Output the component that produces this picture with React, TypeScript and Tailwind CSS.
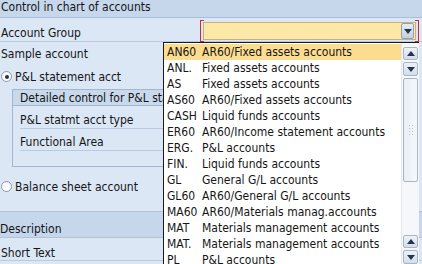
const items: [string, string][] = [
  ['AN60', 'AR60/Fixed assets accounts'],
  ['ANL.', 'Fixed assets accounts'],
  ['AS', 'Fixed assets accounts'],
  ['AS60', 'AR60/Fixed assets accounts'],
  ['CASH', 'Liquid funds accounts'],
  ['ER60', 'AR60/Income statement accounts'],
  ['ERG.', 'P&L accounts'],
  ['FIN.', 'Liquid funds accounts'],
  ['GL', 'General G/L accounts'],
  ['GL60', 'AR60/General G/L accounts'],
  ['MA60', 'AR60/Materials manag.accounts'],
  ['MAT', 'Materials management accounts'],
  ['MAT.', 'Materials management accounts'],
  ['PL', 'P&L accounts'],
];

const Triangle = ({ up = false }: { up?: boolean }) => (
  <svg width="8" height="5" viewBox="0 0 8 5">
    <path d={up ? 'M0 5 L4 0 L8 5 Z' : 'M0 0 L8 0 L4 5 Z'} fill="#23344f" />
  </svg>
);

const ScrollButton = ({ up = false, tall = false }: { up?: boolean; tall?: boolean }) => (
  <div
    className={`flex w-[15px] items-center justify-center rounded-[2px] border border-[#a7b5c8] bg-gradient-to-b from-[#eef2f7] to-[#d3dce8] ${tall ? 'h-[14px]' : 'h-[13px]'}`}
  >
    <Triangle up={up} />
  </div>
);

const Radio = ({ checked = false }: { checked?: boolean }) => (
  <div className="flex h-[11px] w-[11px] items-center justify-center rounded-full border border-[#8d9aab] bg-gradient-to-b from-[#f4f6f9] to-[#ffffff]">
    {checked && <div className="h-[4px] w-[4px] rounded-full bg-[#2a2f38]" />}
  </div>
);

export default function App() {
  return (
    <div className="relative h-[264px] w-[422px] overflow-hidden bg-[#dbe7f5] font-['DejaVu_Sans_Condensed','DejaVu_Sans',sans-serif] text-[12px] leading-[14px] text-[#151515]">
      <div className="h-[18px] border-b border-[#a9bdd8] bg-[#c6d7ec] pl-[1px]">Control in chart of accounts</div>

      <div className="flex h-[24px] items-start border-b border-[#b9cbe2]">
        <div className="w-[200px] pl-[1px] pt-[8px]">Account Group</div>
        <div className="relative mt-[2px] h-[22px] w-[219px] px-[3px] pt-[2px]">
          <div className="absolute left-0 top-0 h-[22px] w-[4px] border-y border-l border-[#cc2b35]" />
          <div className="absolute right-0 top-0 h-[22px] w-[4px] border-y border-r border-[#cc2b35]" />
          <div className="flex h-[18px] items-center justify-end border border-[#c7b07c] bg-[#fde8a8] pr-[1px]">
            <div className="flex h-[16px] w-[13px] items-center justify-center rounded-[2px] border border-[#8fa0b8] bg-gradient-to-b from-[#e7edf5] to-[#c4d0e0]">
              <Triangle />
            </div>
          </div>
        </div>
      </div>

      <div className="h-[22px] pl-[1px] pt-[5px]">Sample account</div>

      <div className="flex h-[25px] items-start gap-[3px] pl-[1px] pt-[6px]">
        <div className="mt-[1px]">
          <Radio checked />
        </div>
        <span>P&amp;L statement acct</span>
      </div>

      <div className="ml-[12px] mr-[4px] h-[78px] border border-[#a4b6cf]">
        <div className="h-[16px] border-b border-[#a4b6cf] bg-[#c9d9ec] pl-[7px] pt-[1px]">
          <div className="w-[143px] overflow-hidden whitespace-nowrap">Detailed control for P&amp;L statement accounts</div>
        </div>
        <div className="ml-[7px] h-[23px] border-b border-[#b9cbe2] pt-[7px]">P&amp;L statmt acct type</div>
        <div className="ml-[7px] h-[22px] border-b border-[#b9cbe2] pt-[6px]">Functional Area</div>
      </div>

      <div className="flex h-[45px] items-start gap-[3px] border-b border-[#b1c3db] pl-[1px] pt-[13px]">
        <div className="mt-[1px]">
          <Radio />
        </div>
        <span>Balance sheet account</span>
      </div>

      <div className="h-[26px] border-b border-[#b1c3db] bg-[#c6d7ec] pt-[10px]">Description</div>
      <div className="h-[23px] border-b border-[#b9cbe2] pl-[1px] pt-[8px]">Short Text</div>

      <div className="absolute left-[163px] top-[42px] flex h-[224px] w-[256px] border-l border-t border-[#1a1a1a] bg-white">
        <div className="w-[237px] pt-px">
          {items.map(([code, text], i) => (
            <div
              key={code}
              className={`flex h-[16px] items-center pl-[3px] leading-[16px] ${i === 0 ? 'bg-[#fcdd90]' : ''}`}
            >
              <span className="w-[35px] shrink-0">{code}</span>
              <span className="whitespace-nowrap">{text}</span>
            </div>
          ))}
        </div>
        <div className="flex w-[18px] flex-col items-center border-l border-[#e3e8ef] bg-[#f5f7fa] pt-[4px]">
          <ScrollButton up />
          <div className="mt-[2px]">
            <ScrollButton tall />
          </div>
          <div className="mt-[2px] flex h-[104px] w-[15px] flex-col items-center justify-center gap-[2px] rounded-[2px] border border-[#a7b5c8] bg-gradient-to-r from-[#e9eef5] to-[#f6f8fb]">
            {[0, 1, 2, 3].map((k) => (
              <div key={k} className="flex gap-[2px]">
                <div className="h-px w-px bg-[#b3bfcf]" />
                <div className="h-px w-px bg-[#b3bfcf]" />
              </div>
            ))}
          </div>
          <div className="flex-1" />
          <ScrollButton up />
          <div className="mb-[2px] mt-[2px]">
            <ScrollButton tall />
          </div>
        </div>
      </div>
    </div>
  );
}
